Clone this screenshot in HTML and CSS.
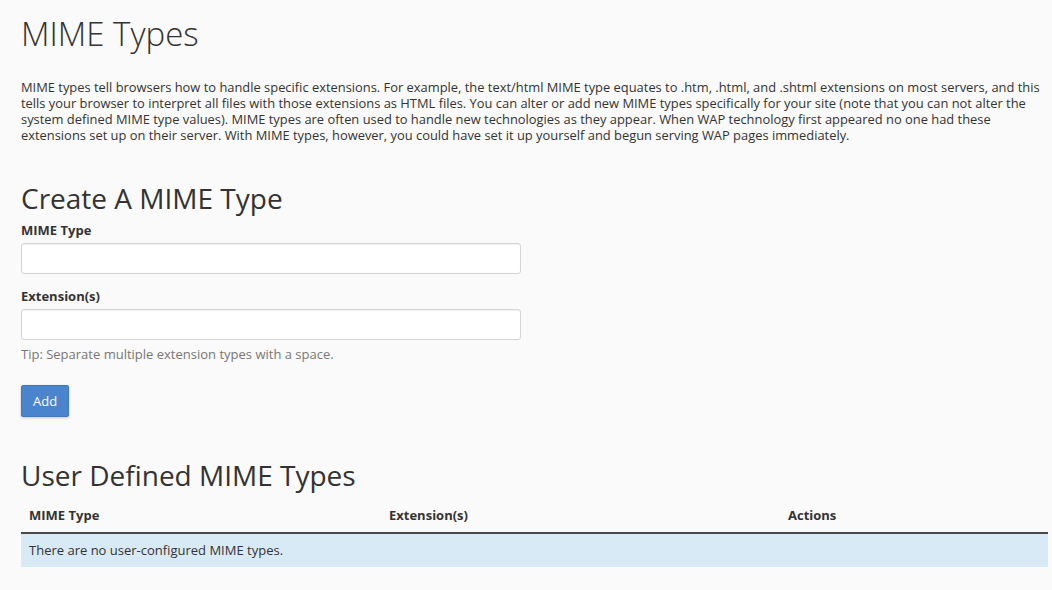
FILE: index.html
```html
<!DOCTYPE html>
<html>
<head>
<meta charset="utf-8">
<link rel="stylesheet" href="styles.css">
</head>
<body>
<div class="page">
  <h1 class="title">MIME Types</h1>
  <p class="intro">MIME types tell browsers how to handle specific extensions. For example, the text/html MIME type equates to .htm, .html, and .shtml extensions on most servers, and this tells your browser to interpret all files with those extensions as HTML files. You can alter or add new MIME types specifically for your site (note that you can not alter the system defined MIME type values). MIME types are often used to handle new technologies as they appear. When WAP technology first appeared no one had these extensions set up on their server. With MIME types, however, you could have set it up yourself and begun serving WAP pages immediately.</p>

  <h2 class="section">Create A MIME Type</h2>
  <form class="form">
    <div class="field">
      <label class="label">MIME Type</label>
      <input class="input" type="text">
    </div>
    <div class="field">
      <label class="label">Extension(s)</label>
      <input class="input" type="text">
      <div class="tip">Tip: Separate multiple extension types with a space.</div>
    </div>
    <button class="btn" type="button">Add</button>
  </form>

  <h2 class="section section-list">User Defined MIME Types</h2>
  <table class="table">
    <thead>
      <tr>
        <th class="col-type">MIME Type</th>
        <th class="col-ext">Extension(s)</th>
        <th class="col-act">Actions</th>
      </tr>
    </thead>
    <tbody>
      <tr class="empty">
        <td colspan="3">There are no user-configured MIME types.</td>
      </tr>
    </tbody>
  </table>
</div>
</body>
</html>
```
FILE: styles.css
```css
* { box-sizing: border-box; }
html, body {
  margin: 0;
  padding: 0;
  background: #fafafa;
}
body {
  font-family: "Open Sans", "Liberation Sans", sans-serif;
  font-size: 13px;
  color: #333;
}
.page {
  padding: 12px 4px 20px 21px;
}
.title {
  font-size: 33px;
  font-weight: 300;
  line-height: 44px;
  margin: 0 0 23px 0;
  color: #333;
}
.intro {
  margin: 0 -4px 0 0;
  line-height: 16px;
  font-size: 12.9px;
}
.section {
  font-size: 28px;
  font-weight: 400;
  line-height: 36px;
  margin: 37px 0 5px 0;
  color: #333;
}
.section-list {
  margin-top: 40px;
  margin-bottom: 5px;
}
.form {
  width: 500px;
}
.field {
  margin-bottom: 13px;
}
.label {
  display: block;
  font-weight: 700;
  line-height: 18px;
  margin-bottom: 4px;
}
.input {
  display: block;
  width: 500px;
  height: 31px;
  border: 1px solid #d4d4d4;
  border-radius: 3px;
  background: #fff;
  box-shadow: inset 0 1px 1px rgba(0,0,0,0.06);
  font-family: inherit;
  font-size: 13px;
  padding: 4px 8px;
}
.tip {
  color: #777;
  margin-top: 5px;
  line-height: 18px;
}
.btn {
  display: block;
  margin-top: 22px;
  height: 32px;
  padding: 0 11px;
  background: #4a84cc;
  color: #fff;
  border: 1px solid #4278be;
  border-radius: 2px;
  box-shadow: 0 1px 3px rgba(0,0,0,0.2);
  font-family: inherit;
  font-size: 13px;
}
.table {
  width: 100%;
  border-collapse: collapse;
}
.table th {
  text-align: left;
  font-weight: 700;
  padding: 8px 8px;
  line-height: 18px;
  border-bottom: 2px solid #4a4a4a;
}
.col-type { width: 360px; }
.col-ext { width: 399px; }
.empty td {
  background: #d9eaf7;
  padding: 8px 8px;
  line-height: 17px;
  height: 33px;
}
```
